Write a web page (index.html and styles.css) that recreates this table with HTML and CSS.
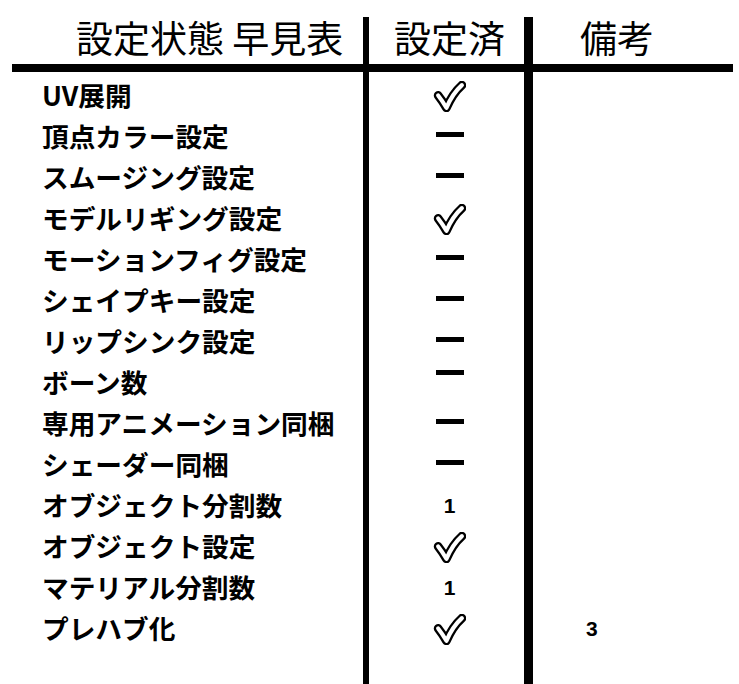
FILE: index.html
```html
<!DOCTYPE html>
<html lang="ja">
<head>
<meta charset="utf-8">
<title>設定状態 早見表</title>
<link rel="stylesheet" href="styles.css">
</head>
<body>
<div class="sheet">
  <div class="head head-title">設定状態 早見表</div>
  <div class="head head-done mark">設定済</div>
  <div class="head head-note">備考</div>
  <div class="rule"></div>

  <div class="label">UV展開</div>
  <div class="mark"><svg class="check" viewBox="0 0 32 30"><path class="ck-o" d="M5 14 Q9 19 13 26 Q19 12 28 4"/><path class="ck-i" d="M5 14 Q9 19 13 26 Q19 12 28 4"/></svg></div>
  <div class="note"></div>

  <div class="label">頂点カラー設定</div>
  <div class="mark"><span class="dash"></span></div>
  <div class="note"></div>

  <div class="label">スムージング設定</div>
  <div class="mark"><span class="dash"></span></div>
  <div class="note"></div>

  <div class="label">モデルリギング設定</div>
  <div class="mark"><svg class="check" viewBox="0 0 32 30"><path class="ck-o" d="M5 14 Q9 19 13 26 Q19 12 28 4"/><path class="ck-i" d="M5 14 Q9 19 13 26 Q19 12 28 4"/></svg></div>
  <div class="note"></div>

  <div class="label">モーションフィグ設定</div>
  <div class="mark"><span class="dash"></span></div>
  <div class="note"></div>

  <div class="label">シェイプキー設定</div>
  <div class="mark"><span class="dash"></span></div>
  <div class="note"></div>

  <div class="label">リップシンク設定</div>
  <div class="mark"><span class="dash"></span></div>
  <div class="note"></div>

  <div class="label">ボーン数</div>
  <div class="mark"><span class="dash dash-up"></span></div>
  <div class="note"></div>

  <div class="label">専用アニメーション同梱</div>
  <div class="mark"><span class="dash"></span></div>
  <div class="note"></div>

  <div class="label">シェーダー同梱</div>
  <div class="mark"><span class="dash"></span></div>
  <div class="note"></div>

  <div class="label">オブジェクト分割数</div>
  <div class="mark"><span class="num">1</span></div>
  <div class="note"></div>

  <div class="label">オブジェクト設定</div>
  <div class="mark"><svg class="check" viewBox="0 0 32 30"><path class="ck-o" d="M5 14 Q9 19 13 26 Q19 12 28 4"/><path class="ck-i" d="M5 14 Q9 19 13 26 Q19 12 28 4"/></svg></div>
  <div class="note"></div>

  <div class="label">マテリアル分割数</div>
  <div class="mark"><span class="num">1</span></div>
  <div class="note"></div>

  <div class="label">プレハブ化</div>
  <div class="mark"><svg class="check" viewBox="0 0 32 30"><path class="ck-o" d="M5 14 Q9 19 13 26 Q19 12 28 4"/><path class="ck-i" d="M5 14 Q9 19 13 26 Q19 12 28 4"/></svg></div>
  <div class="note"><span class="num">3</span></div>

  <div class="label"></div>
  <div class="mark"></div>
  <div class="note"></div>
</div>
</body>
</html>
```
FILE: styles.css
```css
html, body {
  margin: 0;
  padding: 0;
  background: #fff;
  overflow: hidden;
}

body {
  font-family: "Noto Sans CJK JP", "Noto Sans", sans-serif;
  color: #000;
}

.sheet {
  display: grid;
  grid-template-columns: 351px 170px 200px;
  grid-template-rows: 47px 8px repeat(14, 41px) 1fr;
  min-height: 667px;
  margin: 17px 0 0 12px;
  width: 721px;
}

.head {
  display: flex;
  align-items: center;
  font-size: 37px;
  font-weight: 400;
  line-height: 1;
  padding-bottom: 6px;
  box-sizing: border-box;
}

.head-title {
  padding-left: 64px;
}

.head-note {
  padding-left: 47px;
}

.rule {
  grid-column: 1 / -1;
  background: #000;
}

.label,
.mark,
.note {
  display: flex;
  align-items: center;
  box-sizing: border-box;
  padding-top: 5px;
}

.label {
  grid-column: 1;
  padding-left: 30px;
  font-size: 26.7px;
  font-weight: 700;
  line-height: 1;
  white-space: nowrap;
}

.mark {
  grid-column: 2;
  justify-content: center;
  border-left: 6px solid #000;
  border-right: 9px solid #000;
  padding-left: 6px;
}

.head.mark {
  padding-top: 0;
}

.note {
  grid-column: 3;
  padding-left: 53px;
}

.check {
  width: 33px;
  height: 31px;
  display: block;
  margin-top: 3px;
}

.ck-o {
  fill: none;
  stroke: #000;
  stroke-width: 8.5;
  stroke-linecap: round;
  stroke-linejoin: round;
}

.ck-i {
  fill: none;
  stroke: #fff;
  stroke-width: 4;
  stroke-linecap: round;
  stroke-linejoin: round;
}

.dash {
  display: block;
  width: 28px;
  height: 5px;
  background: #000;
  margin-top: -4px;
}

.dash-up {
  margin-top: -20px;
}

.num {
  font-family: "Liberation Sans", Arial, sans-serif;
  font-weight: 700;
  font-size: 21px;
  line-height: 1;
}
```
